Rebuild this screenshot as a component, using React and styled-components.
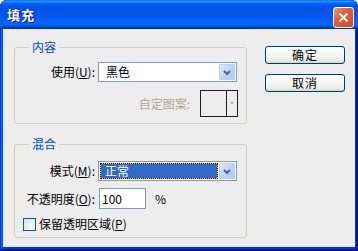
import React from "react";
import styled, { createGlobalStyle } from "styled-components";

const GlobalStyle = createGlobalStyle`
  html, body { margin: 0; padding: 0; background: #fff; }
  body {
    font-family: "Noto Sans CJK SC", "Liberation Sans", sans-serif;
    font-size: 12px;
    line-height: 16px;
    color: #000;
  }
`;

const Window = styled.div`
  width: 358px;
  height: 251px;
  box-sizing: border-box;
  display: flex;
  flex-direction: column;
  background: #0831d9;
  border-radius: 7px 7px 0 0;
  overflow: hidden;
  box-shadow: inset -1px -1px #00138c, inset 1px 1px #0831d9,
    inset -2px -2px #001ea0, inset 2px 2px #166aee, inset -3px -3px #003bda,
    inset 3px 3px #0855dd;
`;

const TitleBar = styled.div`
  height: 29px;
  flex-shrink: 0;
  display: flex;
  align-items: center;
  justify-content: space-between;
  padding: 0 4px 0 7px;
  border-radius: 7px 7px 0 0;
  background: linear-gradient(
    to bottom,
    #0058ee 0%,
    #3593ff 4%,
    #288eff 6%,
    #127dff 8%,
    #036ffc 10%,
    #0262ee 14%,
    #0057e5 20%,
    #0054e3 24%,
    #0055eb 56%,
    #005bf5 66%,
    #026afe 76%,
    #0062ef 86%,
    #0052d6 92%,
    #0040ab 94%,
    #003092 100%
  );
`;

const Title = styled.span`
  color: #fff;
  font-weight: bold;
  font-size: 13px;
  letter-spacing: 1px;
  text-shadow: 1px 1px #0f1089;
`;

const CloseButton = styled.div`
  width: 21px;
  height: 21px;
  box-sizing: border-box;
  margin-top: 5px;
  border: 1px solid #fff;
  border-radius: 3px;
  display: flex;
  align-items: center;
  justify-content: center;
  background: linear-gradient(135deg, #f29a7c 0%, #e5603f 35%, #d6461f 100%);
`;

const Body = styled.div`
  flex: 1;
  margin: 0 3px 4px 3px;
  background: #ededed;
  display: flex;
  gap: 18px;
  padding: 10px 0 0 11px;
`;

const Column = styled.div`
  width: 233px;
  display: flex;
  flex-direction: column;
  gap: 12px;
`;

const Group = styled.fieldset`
  margin: 0;
  min-width: 0;
  padding: ${(p) => p.$top}px 8px ${(p) => p.$bottom}px 0;
  border: 1px solid #d0d0bf;
  border-radius: 3px;
  display: flex;
  flex-direction: column;
  gap: ${(p) => p.$gap}px;
`;

const Legend = styled.legend`
  margin-left: 14px;
  padding: 0 3px;
  color: #0046d5;
  line-height: 16px;
`;

const Row = styled.div`
  display: flex;
  align-items: center;
  gap: ${(p) => p.$gap || 3}px;
  justify-content: ${(p) => (p.$end ? "flex-end" : "flex-start")};
  padding-left: ${(p) => p.$indent || 0}px;
`;

const Label = styled.span`
  width: ${(p) => (p.$width ? `${p.$width}px` : "auto")};
  flex-shrink: 0;
  text-align: right;
  color: ${(p) => (p.$disabled ? "#aca899" : "#000")};
  white-space: nowrap;
`;

const Select = styled.div`
  width: 139px;
  height: 20px;
  box-sizing: border-box;
  border: 1px solid #7f9db9;
  background: #fff;
  display: flex;
  align-items: stretch;
  padding: 1px;
`;

const SelectValue = styled.span`
  flex: 1;
  display: flex;
  align-items: center;
  padding-left: ${(p) => (p.$active ? 4 : 5)}px;
  margin-right: 1px;
  color: ${(p) => (p.$active ? "#fff" : "#000")};
  border: 1px ${(p) => (p.$active ? "dotted #000" : "solid transparent")};
  background: ${(p) =>
    p.$active
      ? "linear-gradient(#316ac5, #316ac5) padding-box, #f2c649 border-box"
      : "transparent"};
`;

const DropButton = styled.span`
  width: 16px;
  box-sizing: border-box;
  border: 1px solid #bccdf6;
  border-radius: 1px;
  background: linear-gradient(135deg, #dce6fc 0%, #c2d3fb 50%, #b1c7f6 100%);
  display: flex;
  align-items: center;
  justify-content: center;
`;

const PatternBox = styled.div`
  width: 38px;
  height: 27px;
  box-sizing: border-box;
  border: 1px solid #1e1e1e;
  display: flex;
`;

const PatternSwatch = styled.span`
  flex: 1;
  background: #ededed;
`;

const PatternArrow = styled.span`
  width: 10px;
  border-left: 1px solid #1e1e1e;
  display: flex;
  align-items: center;
  justify-content: center;

  &::after {
    content: "";
    border-left: 2px solid transparent;
    border-right: 2px solid transparent;
    border-top: 3px solid #a8a8a8;
  }
`;

const TextInput = styled.div`
  width: 47px;
  height: 21px;
  box-sizing: border-box;
  border: 1px solid #7f9db9;
  background: #fff;
  display: flex;
  align-items: center;
  padding-left: 2px;
`;

const Percent = styled.span`
  margin-left: 5px;
`;

const Checkbox = styled.span`
  width: 13px;
  height: 13px;
  box-sizing: border-box;
  border: 1px solid #1c5180;
  background: linear-gradient(135deg, #dcdcd7 0%, #fff 100%);
`;

const Buttons = styled.div`
  display: flex;
  flex-direction: column;
  gap: 10px;
  margin-top: 7px;
`;

const Button = styled.div`
  width: 80px;
  height: 18px;
  box-sizing: border-box;
  border: 1px solid #003c74;
  border-radius: 3px;
  background: linear-gradient(#fff 0%, #f3f3ef 60%, #ecebe6 86%, #d6d0c5 100%);
  display: flex;
  align-items: center;
  justify-content: center;
  letter-spacing: 1px;
`;

const Chevron = () => (
  <svg width="8" height="5" viewBox="0 0 8 5">
    <path d="M1 1 L4 4 L7 1" fill="none" stroke="#4d6185" strokeWidth="2" />
  </svg>
);

export default function App() {
  return (
    <>
      <GlobalStyle />
      <Window>
        <TitleBar>
          <Title>填充</Title>
          <CloseButton>
            <svg width="11" height="11" viewBox="0 0 11 11">
              <path d="M1.5 1.5 L9.5 9.5 M9.5 1.5 L1.5 9.5" stroke="#fff" strokeWidth="2" />
            </svg>
          </CloseButton>
        </TitleBar>
        <Body>
          <Column>
            <Group $top={7} $bottom={6} $gap={8}>
              <Legend>内容</Legend>
              <Row>
                <Label $width={80}>
                  使用(<u>U</u>):
                </Label>
                <Select>
                  <SelectValue>黑色</SelectValue>
                  <DropButton>
                    <Chevron />
                  </DropButton>
                </Select>
              </Row>
              <Row $end $gap={10}>
                <Label $disabled>自定图案:</Label>
                <PatternBox>
                  <PatternSwatch />
                  <PatternArrow />
                </PatternBox>
              </Row>
            </Group>
            <Group $top={9} $bottom={5} $gap={7}>
              <Legend>混合</Legend>
              <Row>
                <Label $width={80}>
                  模式(<u>M</u>):
                </Label>
                <Select>
                  <SelectValue $active>正常</SelectValue>
                  <DropButton>
                    <Chevron />
                  </DropButton>
                </Select>
              </Row>
              <Row $gap={4}>
                <Label $width={80}>
                  不透明度(<u>O</u>):
                </Label>
                <TextInput>100</TextInput>
                <Percent>%</Percent>
              </Row>
              <Row $indent={8} $gap={3}>
                <Checkbox />
                <Label>
                  保留透明区域(<u>P</u>)
                </Label>
              </Row>
            </Group>
          </Column>
          <Buttons>
            <Button>确定</Button>
            <Button>取消</Button>
          </Buttons>
        </Body>
      </Window>
    </>
  );
}
